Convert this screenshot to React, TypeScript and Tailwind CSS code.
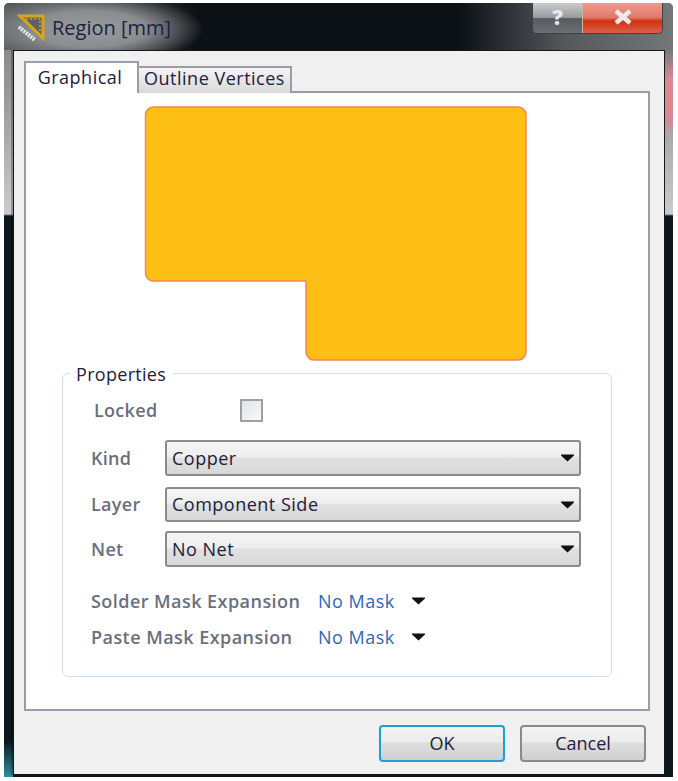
const font = "font-['Open_Sans','Noto_Sans',sans-serif]";

function Arrow({ className = "" }: { className?: string }) {
  return (
    <svg width="13" height="8" viewBox="0 0 13 8" className={className}>
      <path d="M0 0.5H13V1.5L6.5 7.5L0 1.5Z" fill="#111" />
    </svg>
  );
}

function Dropdown({ value, height }: { value: string; height: string }) {
  return (
    <div
      className={`flex ${height} w-[416px] items-center justify-between rounded-[3px] border-2 border-[#8a8a8a] bg-[linear-gradient(#f5f5f5_0%,#eeeeee_45%,#e0e0e0_52%,#d8d8d8_100%)] pl-[5px] pr-[5px] text-[18px] tracking-[0.5px] text-[#1c2038]`}
    >
      <span>{value}</span>
      <Arrow />
    </div>
  );
}

function FieldRow({ label, value, height }: { label: string; value: string; height: string }) {
  return (
    <div className="flex items-center">
      <span className="w-[74px] text-[18px] font-semibold tracking-[0.3px] text-[#6b6f7c]">{label}</span>
      <Dropdown value={value} height={height} />
    </div>
  );
}

function MaskRow({ label }: { label: string }) {
  return (
    <div className="flex h-[36px] items-center">
      <span className="w-[227px] whitespace-nowrap text-[18px] font-semibold tracking-[0.45px] text-[#6b6f7c]">{label}</span>
      <span className="w-[94px] whitespace-nowrap text-[18px] tracking-[0.5px] text-[#2f66b8]">No Mask</span>
      <Arrow />
    </div>
  );
}

function RegionShape() {
  return (
    <svg width="384" height="256" viewBox="0 0 384 256" className="ml-[118px] block">
      <path
        d="M9.5 1H374a8 8 0 0 1 8 8V246a8 8 0 0 1-8 8H170a8 8 0 0 1-8-8V175H9.5a8 8 0 0 1-8-8V9a8 8 0 0 1 8-8Z"
        fill="#fdbf13"
        stroke="#f2865a"
        strokeWidth="1.5"
      />
    </svg>
  );
}

function DialogIcon() {
  return (
    <svg width="28" height="28" viewBox="0 0 28 28" className="mr-[7px]">
      <path d="M3 2H26V24Z" fill="#5d6163" stroke="#d9a514" strokeWidth="3" />
      <path d="M9 5H23V18" fill="none" stroke="#f0c94a" strokeWidth="1" strokeDasharray="2 2" />
      <path d="M2 13L18 26" stroke="#e9e9e9" strokeWidth="4" strokeDasharray="2 1" />
    </svg>
  );
}

export default function App() {
  return (
    <div className={`h-[781px] w-[678px] overflow-hidden bg-white pl-[4px] pt-[3px] ${font}`}>
      <div className="relative h-[774px] w-[669px] rounded-t-[5px] bg-[linear-gradient(#767a7c_0px,#a09fa2_110px,#cbcbcf_211px,#0e171c_213px,#0e171c_100%)]">
        {/* glass title bar */}
        <div className="flex h-[47px] items-center rounded-t-[5px] bg-[radial-gradient(ellipse_115px_36px_at_85px_26px,#9a9d9f_0%,#8a8d8f_50%,#00000000_100%),linear-gradient(90deg,#55595c_0%,#24292d_20%,#0c1115_29%,#0c1115_68%,#55595c_84%,#73777a_100%)] pl-[13px] pt-[2px]">
          <DialogIcon />
          <span className="text-[20px] text-[#1c2140]">Region [mm]</span>
        </div>

        {/* pink glow on the right frame */}
        <div className="absolute right-0 top-[47px] h-[84px] w-[8px] bg-[linear-gradient(#767a7c_0%,#d98a92_35%,#dc8690_80%,#00000000_100%)]" />
        {/* teal glow bottom left */}
        <div className="absolute bottom-0 left-0 h-[36px] w-[9px] bg-[linear-gradient(#00000000,#2f8f9f)]" />

        {/* window buttons */}
        <div className="absolute right-[10px] top-0 flex h-[31px] w-[131px] rounded-b-[5px] border border-t-0 border-[#3c4044]">
          <div className="flex w-[49px] justify-center rounded-bl-[4px] bg-[linear-gradient(#c9cbcc_0%,#9a9d9f_48%,#585c60_52%,#6c7073_100%)] text-[21px] font-extrabold leading-[29px] text-[#e8e8ee]">
            ?
          </div>
          <div className="flex flex-1 items-start justify-center rounded-br-[4px] border-l border-[#d8b0a8] bg-[linear-gradient(#ef9a8c_0%,#e07a6a_48%,#d4300e_60%,#d9604a_100%)] pt-[6px]">
            <svg width="20" height="16" viewBox="0 0 20 16">
              <path d="M3 2L17 14M17 2L3 14" stroke="#eceaf0" strokeWidth="4.5" />
            </svg>
          </div>
        </div>

        {/* client area */}
        <div className="absolute bottom-[2px] left-[9px] right-[8px] top-[47px] border border-[#15191c] bg-[#f0f0f0] pl-[10px] pt-[10px] shadow-[-2px_0_0_#00000040]">
          <div className="relative z-10 flex items-end">
            <div className="flex h-[32px] w-[115px] items-center justify-center border-[2px] border-b-0 border-[#9c9ca8] bg-white pb-[2px] pr-[3px] text-[18px] tracking-[0.5px] text-[#1c2140]">
              Graphical
            </div>
            <div className="flex h-[27px] w-[153px] items-center justify-center border-[2px] border-b-0 border-l-0 border-[#9c9ca8] bg-[linear-gradient(#f4f4f4,#d9d9d9)] pb-[4px] text-[18px] tracking-[0.5px] text-[#1c2140]">
              Outline Vertices
            </div>
          </div>

          <div className="-mt-[2px] h-[620px] w-[626px] border-[2px] border-[#9c9ca8] bg-white pt-[13px]">
            <RegionShape />

            <div className="relative ml-[36px] mt-[11px] h-[304px] w-[550px] rounded-[6px] border border-[#cfe0ec] pl-[28px] pt-[24px]">
              <span className="absolute -top-[13px] left-[6px] bg-white px-[7px] text-[18px] tracking-[0.3px] text-[#1c2140]">Properties</span>

              <div className="flex h-[24px] items-center pl-[3px]">
                <span className="w-[146px] text-[18px] font-semibold tracking-[0.3px] text-[#6b6f7c]">Locked</span>
                <div className="h-[23px] w-[23px] border-2 border-[#a0a0a0] bg-[linear-gradient(135deg,#dfe3e8,#fafafa)]" />
              </div>

              <div className="mt-[18px] flex flex-col">
                <FieldRow label="Kind" value="Copper" height="h-[36px]" />
                <div className="mt-[11px]"><FieldRow label="Layer" value="Component Side" height="h-[35px]" /></div>
                <div className="mt-[9px]"><FieldRow label="Net" value="No Net" height="h-[36px]" /></div>
              </div>

              <div className="mt-[16px] flex flex-col">
                <MaskRow label="Solder Mask Expansion" />
                <MaskRow label="Paste Mask Expansion" />
              </div>
            </div>
          </div>

          <div className="mt-[14px] flex justify-end gap-[15px] pr-[18px]">
            <div className="flex h-[37px] w-[126px] items-center justify-center rounded-[4px] border-[2px] border-[#1f9fd0] bg-[linear-gradient(#f4f4f4_0%,#ebebeb_45%,#dddddd_50%,#d0d0d0_100%)] text-[18px] text-[#1c2140]">
              OK
            </div>
            <div className="flex h-[37px] w-[126px] items-center justify-center rounded-[4px] border-[2px] border-[#8a8a8a] bg-[linear-gradient(#f4f4f4_0%,#ebebeb_45%,#dddddd_50%,#d0d0d0_100%)] text-[18px] text-[#1c2140]">
              Cancel
            </div>
          </div>
        </div>
      </div>
    </div>
  );
}
